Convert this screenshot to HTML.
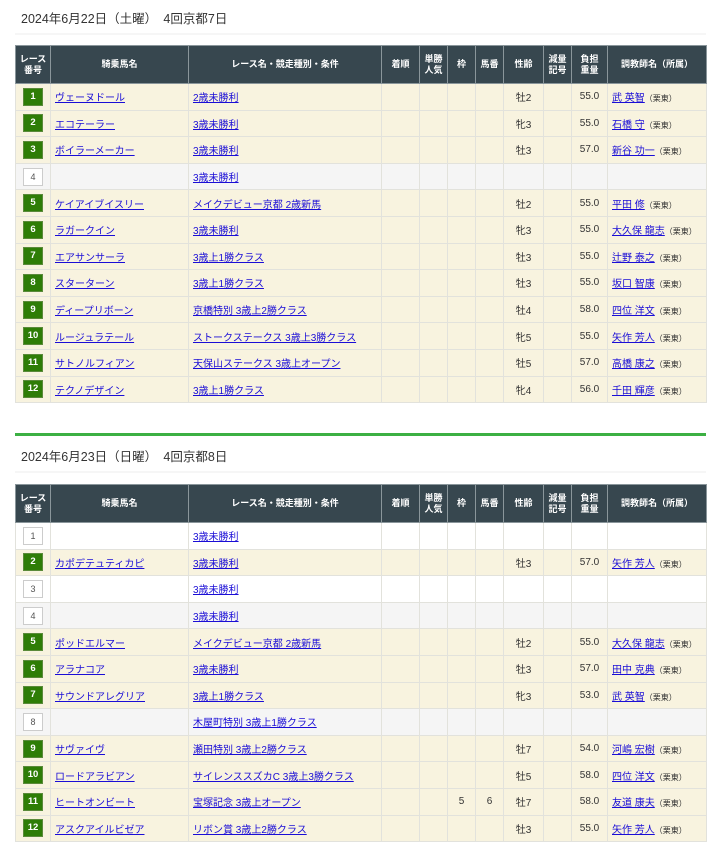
<!DOCTYPE html>
<html><head><meta charset="utf-8"><style>
*{box-sizing:border-box;margin:0;padding:0}
body{width:720px;height:849px;background:#fff;font-family:"Liberation Sans","Noto Sans CJK JP",sans-serif;color:#333;overflow:hidden;position:relative}
.ttl{position:absolute;left:21px;font-size:12.5px;color:#333}
.hl{position:absolute;left:15px;width:691px;height:2px;background:#f6f6f6}
.gl{position:absolute;left:15px;width:691px;height:3px;background:#3cb043}
table{position:absolute;left:15px;width:691px;border-collapse:collapse;table-layout:fixed;font-size:10px}
th{background:#37474f;color:#fff;font-weight:bold;height:38px;border:1px solid #8a969b;font-size:9px;line-height:11px}
td{height:26.6px;border:1px solid #e2e2dc;text-align:center;padding:0;vertical-align:middle}
tr.y td{background:#f8f3df}
tr.g td{background:#f5f5f5}
td.l{text-align:left;padding-left:4px}
a{color:#1a0dd6;text-decoration:underline}
.b{display:inline-block;width:20px;height:18px;line-height:16px;background:#2e7d06;color:#fff;font-weight:bold;font-size:9.5px;border:1px solid #5a8a3a;vertical-align:middle}
.w{display:inline-block;width:20px;height:18px;line-height:16px;background:#fff;color:#555;border:1px solid #ccc;font-size:9px;vertical-align:middle}
.s{font-size:8px}
</style></head><body>
<div class="ttl" style="top:8px">2024年6月22日（土曜）　4回京都7日</div>
<div class="hl" style="top:33px"></div>
<table style="top:45px">
<colgroup><col style="width:35px"><col style="width:138px"><col style="width:193px"><col style="width:38px"><col style="width:28px"><col style="width:28px"><col style="width:28px"><col style="width:40px"><col style="width:28px"><col style="width:36px"><col style="width:99px"></colgroup>
<tr><th>レース<br>番号</th><th>騎乗馬名</th><th>レース名・競走種別・条件</th><th>着順</th><th>単勝<br>人気</th><th>枠</th><th>馬番</th><th>性齢</th><th>減量<br>記号</th><th>負担<br>重量</th><th>調教師名（所属）</th></tr>
<tr class="y"><td><span class="b">1</span></td><td class="l"><a>ヴェーヌドール</a></td><td class="l"><a>2歳未勝利</a></td><td></td><td></td><td></td><td></td><td>牡2</td><td></td><td>55.0</td><td class="l"><a>武 英智</a><span class="s">（栗東）</span></td></tr>
<tr class="y"><td><span class="b">2</span></td><td class="l"><a>エコテーラー</a></td><td class="l"><a>3歳未勝利</a></td><td></td><td></td><td></td><td></td><td>牝3</td><td></td><td>55.0</td><td class="l"><a>石橋 守</a><span class="s">（栗東）</span></td></tr>
<tr class="y"><td><span class="b">3</span></td><td class="l"><a>ボイラーメーカー</a></td><td class="l"><a>3歳未勝利</a></td><td></td><td></td><td></td><td></td><td>牡3</td><td></td><td>57.0</td><td class="l"><a>新谷 功一</a><span class="s">（栗東）</span></td></tr>
<tr class="g"><td><span class="w">4</span></td><td class="l"></td><td class="l"><a>3歳未勝利</a></td><td></td><td></td><td></td><td></td><td></td><td></td><td></td><td></td></tr>
<tr class="y"><td><span class="b">5</span></td><td class="l"><a>ケイアイブイスリー</a></td><td class="l"><a>メイクデビュー京都 2歳新馬</a></td><td></td><td></td><td></td><td></td><td>牡2</td><td></td><td>55.0</td><td class="l"><a>平田 修</a><span class="s">（栗東）</span></td></tr>
<tr class="y"><td><span class="b">6</span></td><td class="l"><a>ラガークイン</a></td><td class="l"><a>3歳未勝利</a></td><td></td><td></td><td></td><td></td><td>牝3</td><td></td><td>55.0</td><td class="l"><a>大久保 龍志</a><span class="s">（栗東）</span></td></tr>
<tr class="y"><td><span class="b">7</span></td><td class="l"><a>エアサンサーラ</a></td><td class="l"><a>3歳上1勝クラス</a></td><td></td><td></td><td></td><td></td><td>牡3</td><td></td><td>55.0</td><td class="l"><a>辻野 泰之</a><span class="s">（栗東）</span></td></tr>
<tr class="y"><td><span class="b">8</span></td><td class="l"><a>スターターン</a></td><td class="l"><a>3歳上1勝クラス</a></td><td></td><td></td><td></td><td></td><td>牡3</td><td></td><td>55.0</td><td class="l"><a>坂口 智康</a><span class="s">（栗東）</span></td></tr>
<tr class="y"><td><span class="b">9</span></td><td class="l"><a>ディープリボーン</a></td><td class="l"><a>京橋特別 3歳上2勝クラス</a></td><td></td><td></td><td></td><td></td><td>牡4</td><td></td><td>58.0</td><td class="l"><a>四位 洋文</a><span class="s">（栗東）</span></td></tr>
<tr class="y"><td><span class="b">10</span></td><td class="l"><a>ルージュラテール</a></td><td class="l"><a>ストークステークス 3歳上3勝クラス</a></td><td></td><td></td><td></td><td></td><td>牝5</td><td></td><td>55.0</td><td class="l"><a>矢作 芳人</a><span class="s">（栗東）</span></td></tr>
<tr class="y"><td><span class="b">11</span></td><td class="l"><a>サトノルフィアン</a></td><td class="l"><a>天保山ステークス 3歳上オープン</a></td><td></td><td></td><td></td><td></td><td>牡5</td><td></td><td>57.0</td><td class="l"><a>高橋 康之</a><span class="s">（栗東）</span></td></tr>
<tr class="y"><td><span class="b">12</span></td><td class="l"><a>テクノデザイン</a></td><td class="l"><a>3歳上1勝クラス</a></td><td></td><td></td><td></td><td></td><td>牝4</td><td></td><td>56.0</td><td class="l"><a>千田 輝彦</a><span class="s">（栗東）</span></td></tr>
</table>
<div class="gl" style="top:433px"></div>
<div class="ttl" style="top:446px">2024年6月23日（日曜）　4回京都8日</div>
<div class="hl" style="top:471px"></div>
<table style="top:484px">
<colgroup><col style="width:35px"><col style="width:138px"><col style="width:193px"><col style="width:38px"><col style="width:28px"><col style="width:28px"><col style="width:28px"><col style="width:40px"><col style="width:28px"><col style="width:36px"><col style="width:99px"></colgroup>
<tr><th>レース<br>番号</th><th>騎乗馬名</th><th>レース名・競走種別・条件</th><th>着順</th><th>単勝<br>人気</th><th>枠</th><th>馬番</th><th>性齢</th><th>減量<br>記号</th><th>負担<br>重量</th><th>調教師名（所属）</th></tr>
<tr><td><span class="w">1</span></td><td class="l"></td><td class="l"><a>3歳未勝利</a></td><td></td><td></td><td></td><td></td><td></td><td></td><td></td><td></td></tr>
<tr class="y"><td><span class="b">2</span></td><td class="l"><a>カポデテュティカピ</a></td><td class="l"><a>3歳未勝利</a></td><td></td><td></td><td></td><td></td><td>牡3</td><td></td><td>57.0</td><td class="l"><a>矢作 芳人</a><span class="s">（栗東）</span></td></tr>
<tr><td><span class="w">3</span></td><td class="l"></td><td class="l"><a>3歳未勝利</a></td><td></td><td></td><td></td><td></td><td></td><td></td><td></td><td></td></tr>
<tr class="g"><td><span class="w">4</span></td><td class="l"></td><td class="l"><a>3歳未勝利</a></td><td></td><td></td><td></td><td></td><td></td><td></td><td></td><td></td></tr>
<tr class="y"><td><span class="b">5</span></td><td class="l"><a>ポッドエルマー</a></td><td class="l"><a>メイクデビュー京都 2歳新馬</a></td><td></td><td></td><td></td><td></td><td>牡2</td><td></td><td>55.0</td><td class="l"><a>大久保 龍志</a><span class="s">（栗東）</span></td></tr>
<tr class="y"><td><span class="b">6</span></td><td class="l"><a>アラナコア</a></td><td class="l"><a>3歳未勝利</a></td><td></td><td></td><td></td><td></td><td>牡3</td><td></td><td>57.0</td><td class="l"><a>田中 克典</a><span class="s">（栗東）</span></td></tr>
<tr class="y"><td><span class="b">7</span></td><td class="l"><a>サウンドアレグリア</a></td><td class="l"><a>3歳上1勝クラス</a></td><td></td><td></td><td></td><td></td><td>牝3</td><td></td><td>53.0</td><td class="l"><a>武 英智</a><span class="s">（栗東）</span></td></tr>
<tr class="g"><td><span class="w">8</span></td><td class="l"></td><td class="l"><a>木屋町特別 3歳上1勝クラス</a></td><td></td><td></td><td></td><td></td><td></td><td></td><td></td><td></td></tr>
<tr class="y"><td><span class="b">9</span></td><td class="l"><a>サヴァイヴ</a></td><td class="l"><a>瀬田特別 3歳上2勝クラス</a></td><td></td><td></td><td></td><td></td><td>牡7</td><td></td><td>54.0</td><td class="l"><a>河嶋 宏樹</a><span class="s">（栗東）</span></td></tr>
<tr class="y"><td><span class="b">10</span></td><td class="l"><a>ロードアラビアン</a></td><td class="l"><a>サイレンススズカC 3歳上3勝クラス</a></td><td></td><td></td><td></td><td></td><td>牡5</td><td></td><td>58.0</td><td class="l"><a>四位 洋文</a><span class="s">（栗東）</span></td></tr>
<tr class="y"><td><span class="b">11</span></td><td class="l"><a>ヒートオンビート</a></td><td class="l"><a>宝塚記念 3歳上オープン</a></td><td></td><td></td><td>5</td><td>6</td><td>牡7</td><td></td><td>58.0</td><td class="l"><a>友道 康夫</a><span class="s">（栗東）</span></td></tr>
<tr class="y"><td><span class="b">12</span></td><td class="l"><a>アスクアイルビゼア</a></td><td class="l"><a>リボン賞 3歳上2勝クラス</a></td><td></td><td></td><td></td><td></td><td>牡3</td><td></td><td>55.0</td><td class="l"><a>矢作 芳人</a><span class="s">（栗東）</span></td></tr>
</table>
</body></html>
